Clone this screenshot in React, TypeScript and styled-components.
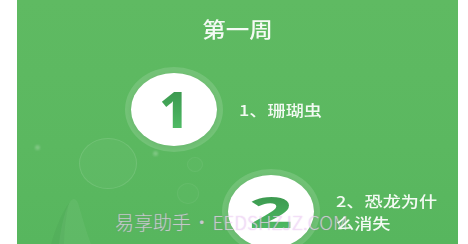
import React from 'react';
import styled, { createGlobalStyle } from 'styled-components';

const GlobalStyle = createGlobalStyle`
  html, body {
    margin: 0;
    padding: 0;
    background: #ffffff;
  }
`;

const lessons = [
  { id: 1, title: '1、珊瑚虫', indent: 114, digitSize: 49, digitScale: 1.05 },
  { id: 2, title: '2、恐龙为什么消失', indent: 211, digitSize: 42, digitScale: 1.8 },
];

const bubbles = [
  { x: 62, y: 18, w: 56, h: 49, alpha: 0.1 },
  { x: 170, y: 37, w: 14, h: 13, alpha: 0.05 },
  { x: 160, y: 63, w: 20, h: 19, alpha: 0.05 },
];

const specks = [
  { x: 18, y: 25 },
  { x: 136, y: 31 },
];

const App: React.FC = () => {
  return (
    <>
      <GlobalStyle />
      <Page>
        <Panel>
          <Decor>
            {bubbles.map((b, i) => (
              <Bubble key={i} $alpha={b.alpha} style={{ left: b.x, top: 120 + b.y, width: b.w, height: b.h }} />
            ))}
            {specks.map((s, i) => (
              <Speck key={i} style={{ left: s.x, top: 120 + s.y }} />
            ))}
            <Blade width="60" height="50" viewBox="0 0 60 50">
              <path d="M20 50 C22 34 25 18 31 8 C34 3 38 4 40 12 C44 26 48 40 52 50 Z" fill="rgba(255,255,255,0.05)" />
              <path d="M12 50 C16 36 22 20 30 9 C27 22 25 36 25 50 Z" fill="rgba(0,60,20,0.04)" />
            </Blade>
          </Decor>

          <Title>第一周</Title>

          <Lessons>
            {lessons.map((lesson) => (
              <LessonRow key={lesson.id} $indent={lesson.indent}>
                <Badge>
                  <Digit $size={lesson.digitSize} $scale={lesson.digitScale}>{lesson.id}</Digit>
                </Badge>
                <LessonTitle>{lesson.title}</LessonTitle>
              </LessonRow>
            ))}
          </Lessons>

          <Watermark>易享助手 • EEDSHZJZ.COM</Watermark>
        </Panel>
      </Page>
    </>
  );
};

const Page = styled.div`
  width: 468px;
  height: 244px;
  display: flex;
  padding: 0 10px 0 17px;
  box-sizing: border-box;
  background: #ffffff;
`;

const Panel = styled.div`
  position: relative;
  flex: 1;
  overflow: hidden;
  display: flex;
  flex-direction: column;
  background: linear-gradient(180deg, #5fba62 0%, #5bb860 60%, #57b65e 100%);
  font-family: "Noto Sans CJK SC", "Noto Sans", sans-serif;
`;

const Decor = styled.div`
  position: absolute;
  inset: 0;
  pointer-events: none;
`;

const Bubble = styled.div<{ $alpha: number }>`
  position: absolute;
  border-radius: 50%;
  border: 1px solid rgba(255, 255, 255, ${(p) => p.$alpha});
  background: rgba(255, 255, 255, ${(p) => p.$alpha * 0.35});
`;

const Speck = styled.div`
  position: absolute;
  width: 5px;
  height: 5px;
  border-radius: 50%;
  background: rgba(255, 255, 255, 0.22);
  filter: blur(1px);
`;

const Blade = styled.svg`
  position: absolute;
  left: 22px;
  bottom: 0;
`;

const Title = styled.div`
  position: relative;
  margin-top: 16px;
  text-align: center;
  font-size: 21px;
  line-height: 24px;
  font-weight: 500;
  color: #f4faf4;
  transform: scaleX(1.12);
`;

const Lessons = styled.div`
  position: relative;
  display: flex;
  flex-direction: column;
  gap: 29px;
  margin-top: 33px;
`;

const LessonRow = styled.div<{ $indent: number }>`
  display: flex;
  align-items: center;
  gap: 22px;
  padding-left: ${(p) => p.$indent}px;
`;

const Badge = styled.div`
  flex: none;
  width: 86px;
  height: 73px;
  border-radius: 50%;
  background: #ffffff;
  box-shadow: 0 0 0 6px rgba(255, 255, 255, 0.14), 0 1px 4px rgba(0, 80, 20, 0.12);
  display: flex;
  align-items: center;
  justify-content: center;
`;

const Digit = styled.span<{ $size: number; $scale: number }>`
  display: inline-block;
  font-family: "Noto Sans", sans-serif;
  font-weight: 800;
  font-size: ${(p) => p.$size}px;
  line-height: 1;
  transform: scaleX(${(p) => p.$scale});
  background: linear-gradient(180deg, #3a944d 0%, #45ab5a 55%, #52c068 100%);
  -webkit-background-clip: text;
  background-clip: text;
  color: transparent;
`;

const LessonTitle = styled.div`
  position: relative;
  z-index: 2;
  width: 85px;
  font-size: 15px;
  line-height: 22px;
  font-weight: 500;
  color: #f3faf3;
  transform: scaleX(1.21);
  transform-origin: left center;
`;

const Watermark = styled.div`
  position: absolute;
  z-index: 1;
  left: 98px;
  top: 208px;
  font-size: 19px;
  line-height: 28px;
  font-weight: 300;
  white-space: nowrap;
  word-spacing: -3px;
  color: rgba(255, 255, 255, 0.5);
  text-shadow: 0 0 1px rgba(200, 110, 220, 0.55);
  pointer-events: none;
`;

export default App;
